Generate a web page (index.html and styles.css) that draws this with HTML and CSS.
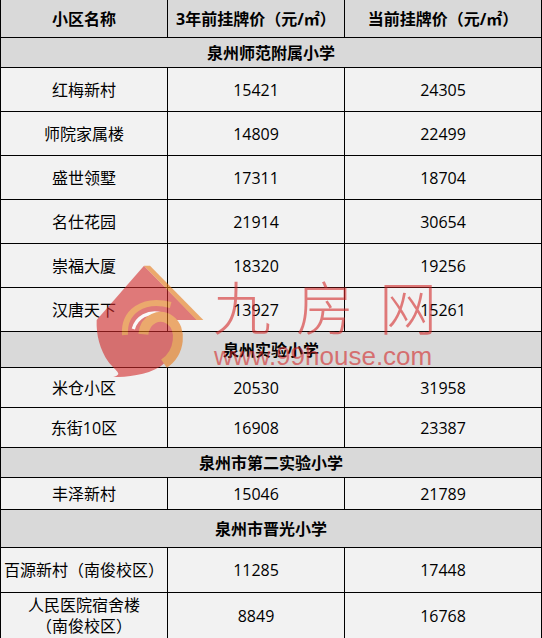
FILE: index.html
```html
<!DOCTYPE html>
<html lang="zh-CN">
<head>
<meta charset="utf-8">
<title>学区房挂牌价</title>
<link rel="stylesheet" href="styles.css">
</head>
<body>
<div class="page">
  <div class="grid">
    <div class="cell head">小区名称</div>
    <div class="cell head">3年前挂牌价（元/㎡）</div>
    <div class="cell head">当前挂牌价（元/㎡）</div>

    <div class="cell sec">泉州师范附属小学</div>
    <div class="cell">红梅新村</div><div class="cell">15421</div><div class="cell">24305</div>
    <div class="cell">师院家属楼</div><div class="cell">14809</div><div class="cell">22499</div>
    <div class="cell">盛世领墅</div><div class="cell">17311</div><div class="cell">18704</div>
    <div class="cell">名仕花园</div><div class="cell">21914</div><div class="cell">30654</div>
    <div class="cell">崇福大厦</div><div class="cell">18320</div><div class="cell">19256</div>
    <div class="cell">汉唐天下</div><div class="cell">13927</div><div class="cell">15261</div>

    <div class="cell sec">泉州实验小学</div>
    <div class="cell">米仓小区</div><div class="cell">20530</div><div class="cell">31958</div>
    <div class="cell">东街10区</div><div class="cell">16908</div><div class="cell">23387</div>

    <div class="cell sec">泉州市第二实验小学</div>
    <div class="cell">丰泽新村</div><div class="cell">15046</div><div class="cell">21789</div>

    <div class="cell sec">泉州市晋光小学</div>
    <div class="cell">百源新村（南俊校区）</div><div class="cell">11285</div><div class="cell">17448</div>
    <div class="cell two">人民医院宿舍楼<br>（南俊校区）</div><div class="cell">8849</div><div class="cell">16768</div>
  </div>

  <div class="watermark">
    <svg class="wm-icon" width="130" height="130" viewBox="-90 0 390 390">
      <path class="red" d="M72,32 L232,195 L-70,195 Z"/>
      <path class="red" d="M-70,195 L160,195 C175,240 170,300 120,335 C80,360 20,366 -20,366 C10,356 -10,352 -35,320 C-60,285 -72,240 -70,195 Z"/>
      <path class="orange" d="M72,32 L90,32 L250,195 L230,195 Z"/>
      <path class="orange-stroke wide18" d="M15,240 C10,170 70,128 152,150"/>
      <path class="white-stroke" d="M40,222 C50,186 85,168 122,176"/>
      <path class="orange-stroke wide30" d="M70,238 C75,190 120,174 150,195 C186,220 182,292 132,326"/>
    </svg>
    <div class="wm-name">九房网</div>
    <div class="wm-url">www.99house.com</div>
  </div>
</div>
</body>
</html>
```
FILE: styles.css
```css
html, body {
  margin: 0;
  padding: 0;
  background: #ffffff;
}

.page {
  position: relative;
  width: 542px;
  height: 638px;
  overflow: hidden;
}

.grid {
  display: grid;
  grid-template-columns: 166px 176px 196px;
  grid-template-rows: 37px 29px repeat(6, 43px) 35px 39px 39px 29px 31px 37px 44px 46px;
  gap: 1px;
  padding: 0 1px;
  background: #000000;
  font-family: "Open Sans", "Noto Sans CJK SC", sans-serif;
  font-size: 16px;
  color: #000000;
}

.cell {
  background: #f2f2f2;
  display: flex;
  align-items: center;
  justify-content: center;
  text-align: center;
  line-height: 20px;
  white-space: nowrap;
}

.head,
.sec {
  background: #d9d9d9;
  font-weight: bold;
}

.sec {
  grid-column: 1 / -1;
}

.two {
  line-height: 21px;
}

.watermark {
  position: absolute;
  left: 0;
  top: 0;
  width: 542px;
  height: 638px;
  opacity: 0.6;
  pointer-events: none;
}

.wm-icon {
  position: absolute;
  left: 90px;
  top: 255px;
}

.red {
  fill: #d42a2a;
}

.orange {
  fill: #e87a16;
}

.orange-stroke {
  fill: none;
  stroke: #e87a16;
}

.wide18 {
  stroke-width: 18;
}

.wide30 {
  stroke-width: 30;
}

.white-stroke {
  fill: none;
  stroke: #ffffff;
  stroke-width: 10;
}

.wm-name {
  position: absolute;
  left: 213px;
  top: 276px;
  font-family: "Noto Sans CJK SC", sans-serif;
  font-weight: 300;
  font-size: 58px;
  line-height: 58px;
  letter-spacing: 25px;
  color: #d42a2a;
  white-space: nowrap;
}

.wm-url {
  position: absolute;
  left: 214px;
  top: 343px;
  font-family: "Liberation Sans", sans-serif;
  font-size: 26px;
  line-height: 26px;
  color: #d42a2a;
  white-space: nowrap;
}
```
